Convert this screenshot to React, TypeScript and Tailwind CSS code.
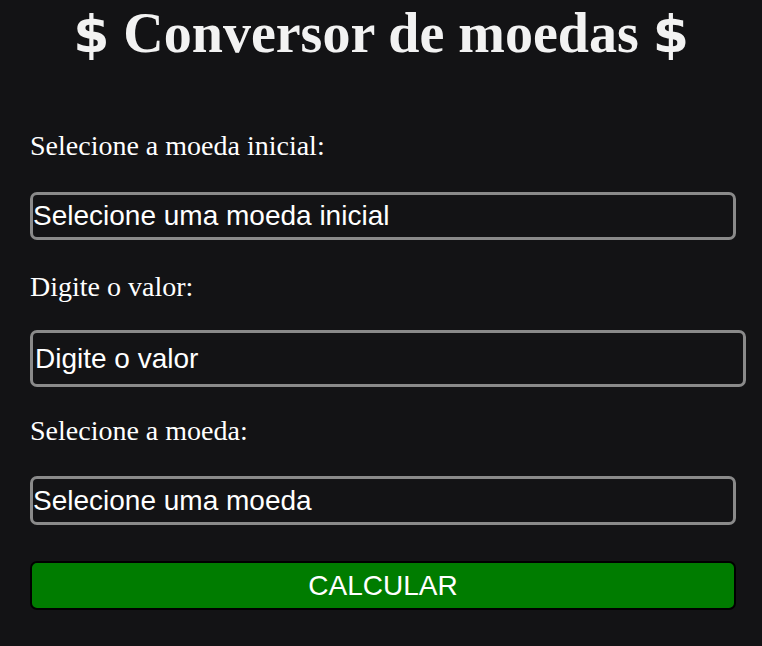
import React, { useState } from 'react';

const App: React.FC = () => {
  const [valor, setValor] = useState('');

  return (
    <div className="min-h-[646px] bg-[#131315] text-white px-[30px]">
      <h1 className="text-center text-[56px] font-bold leading-none pt-[5px] text-[#f2f2f2] font-['Liberation_Serif',serif]">
        <span className="font-['DejaVu_Sans',sans-serif] text-[52px]">$</span> Conversor de moedas <span className="font-['DejaVu_Sans',sans-serif] text-[52px]">$</span>
      </h1>
      <form className="mt-[71px] flex flex-col font-['Liberation_Serif',serif]">
        <label className="text-[28px] leading-none">Selecione a moeda inicial:</label>
        <div className="mt-[32px] w-[706px] h-[48px] border-[3px] border-[#8a8a8a] rounded-[7px] flex items-center font-['Liberation_Sans',sans-serif] text-[28px]">
          Selecione uma moeda inicial
        </div>
        <label className="mt-[33px] text-[28px] leading-none">Digite o valor:</label>
        <input
          value={valor}
          onChange={(e) => setValor(e.target.value)}
          placeholder="Digite o valor"
          className="mt-[29px] w-[716px] h-[57px] border-[3px] border-[#8a8a8a] rounded-[7px] bg-transparent px-[2px] font-['Liberation_Sans',sans-serif] text-[28px] text-white placeholder-white outline-none"
        />
        <label className="mt-[30px] text-[28px] leading-none">Selecione a moeda:</label>
        <div className="mt-[31px] w-[706px] h-[49px] border-[3px] border-[#8a8a8a] rounded-[7px] flex items-center font-['Liberation_Sans',sans-serif] text-[28px]">
          Selecione uma moeda
        </div>
        <button
          type="button"
          className="mt-[36px] w-[706px] h-[49px] bg-[#007c00] border-2 border-black rounded-[7px] font-['Liberation_Sans',sans-serif] text-[28px] text-white"
        >
          CALCULAR
        </button>
      </form>
    </div>
  );
};

export default App;
